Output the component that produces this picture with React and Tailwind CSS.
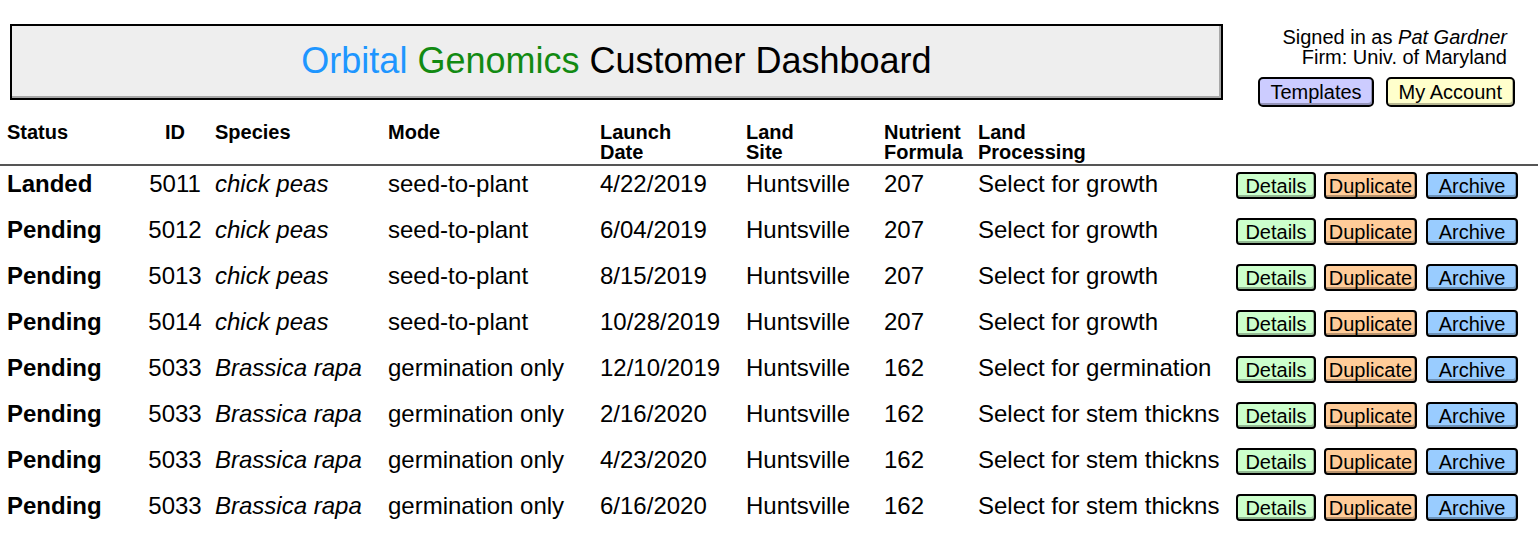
import React from "react";

const rows = [
  ["Landed", "5011", "chick peas", "seed-to-plant", "4/22/2019", "Huntsville", "207", "Select for growth"],
  ["Pending", "5012", "chick peas", "seed-to-plant", "6/04/2019", "Huntsville", "207", "Select for growth"],
  ["Pending", "5013", "chick peas", "seed-to-plant", "8/15/2019", "Huntsville", "207", "Select for growth"],
  ["Pending", "5014", "chick peas", "seed-to-plant", "10/28/2019", "Huntsville", "207", "Select for growth"],
  ["Pending", "5033", "Brassica rapa", "germination only", "12/10/2019", "Huntsville", "162", "Select for germination"],
  ["Pending", "5033", "Brassica rapa", "germination only", "2/16/2020", "Huntsville", "162", "Select for stem thickns"],
  ["Pending", "5033", "Brassica rapa", "germination only", "4/23/2020", "Huntsville", "162", "Select for stem thickns"],
  ["Pending", "5033", "Brassica rapa", "germination only", "6/16/2020", "Huntsville", "162", "Select for stem thickns"],
];

function RowButton({ children, className }) {
  return (
    <button
      className={
        "h-[27px] flex items-center justify-center border-2 border-black rounded-[4px] text-[20px] leading-[20px] text-black shadow-[inset_-1px_-2px_0_rgba(0,0,0,0.28)] " +
        className
      }
    >
      {children}
    </button>
  );
}

export default function App() {
  return (
    <div className="w-[1538px] h-[542px] bg-white text-black font-['Liberation_Sans',Arial,sans-serif] overflow-hidden">
      <div className="flex items-start pt-[24px] pl-[10px]">
        <div className="w-[1213px] h-[76px] border-2 border-black bg-[#eeeeee] shadow-[inset_-2px_-2px_0_#a8a8a8] flex items-center justify-center">
          <div className="text-[36px] leading-[40px] mt-[-2px]">
            <span className="text-[#1e96ff]">Orbital</span>{" "}
            <span className="text-[#128a12]">Genomics</span>{" "}
            <span className="text-black">Customer Dashboard</span>
          </div>
        </div>
        <div className="flex-1 flex flex-col items-end pr-[23px] pt-[3px]">
          <div className="pr-[8px] text-right text-[20px] leading-[20px]">
            <div>
              Signed in as <span className="italic">Pat Gardner</span>
            </div>
            <div>Firm: Univ. of Maryland</div>
          </div>
          <div className="flex gap-[12px] mt-[10px]">
            <button className="h-[30px] px-[10px] border-2 border-black rounded-[5px] bg-[#ccccff] text-[20px] leading-[20px] shadow-[inset_-1px_-2px_0_rgba(0,0,0,0.28)]">
              Templates
            </button>
            <button className="h-[30px] px-[11px] border-2 border-black rounded-[5px] bg-[#ffffcc] text-[20px] leading-[20px] shadow-[inset_-1px_-2px_0_rgba(0,0,0,0.28)]">
              My Account
            </button>
          </div>
        </div>
      </div>

      <div className="mt-[15px] flex pl-[7px] pb-[2px] border-b-2 border-[#555] font-bold text-[20px] leading-[20px]">
        <div className="w-[133px]">Status</div>
        <div className="w-[70px] text-center">ID</div>
        <div className="w-[178px] pl-[5px]">Species</div>
        <div className="w-[212px]">Mode</div>
        <div className="w-[146px]">
          Launch
          <br />
          Date
        </div>
        <div className="w-[138px]">
          Land
          <br />
          Site
        </div>
        <div className="w-[94px]">
          Nutrient
          <br />
          Formula
        </div>
        <div className="w-[258px]">
          Land
          <br />
          Processing
        </div>
      </div>

      <div>
        {rows.map((r, i) => (
          <div key={i} className="h-[46px] pb-[10px] flex items-center pl-[7px] text-[24px] leading-[30px]">
            <div className="w-[133px] font-bold">{r[0]}</div>
            <div className="w-[70px] text-center">{r[1]}</div>
            <div className="w-[178px] pl-[5px] italic">{r[2]}</div>
            <div className="w-[212px]">{r[3]}</div>
            <div className="w-[146px]">{r[4]}</div>
            <div className="w-[138px]">{r[5]}</div>
            <div className="w-[94px]">{r[6]}</div>
            <div className="w-[258px] whitespace-nowrap">{r[7]}</div>
            <div className="flex items-center mt-[3px]">
              <RowButton className="w-[80px] bg-[#ccffcc]">Details</RowButton>
              <RowButton className="w-[93px] ml-[8px] bg-[#ffcc99]">Duplicate</RowButton>
              <RowButton className="w-[92px] ml-[9px] bg-[#99ccff]">Archive</RowButton>
            </div>
          </div>
        ))}
      </div>
    </div>
  );
}
